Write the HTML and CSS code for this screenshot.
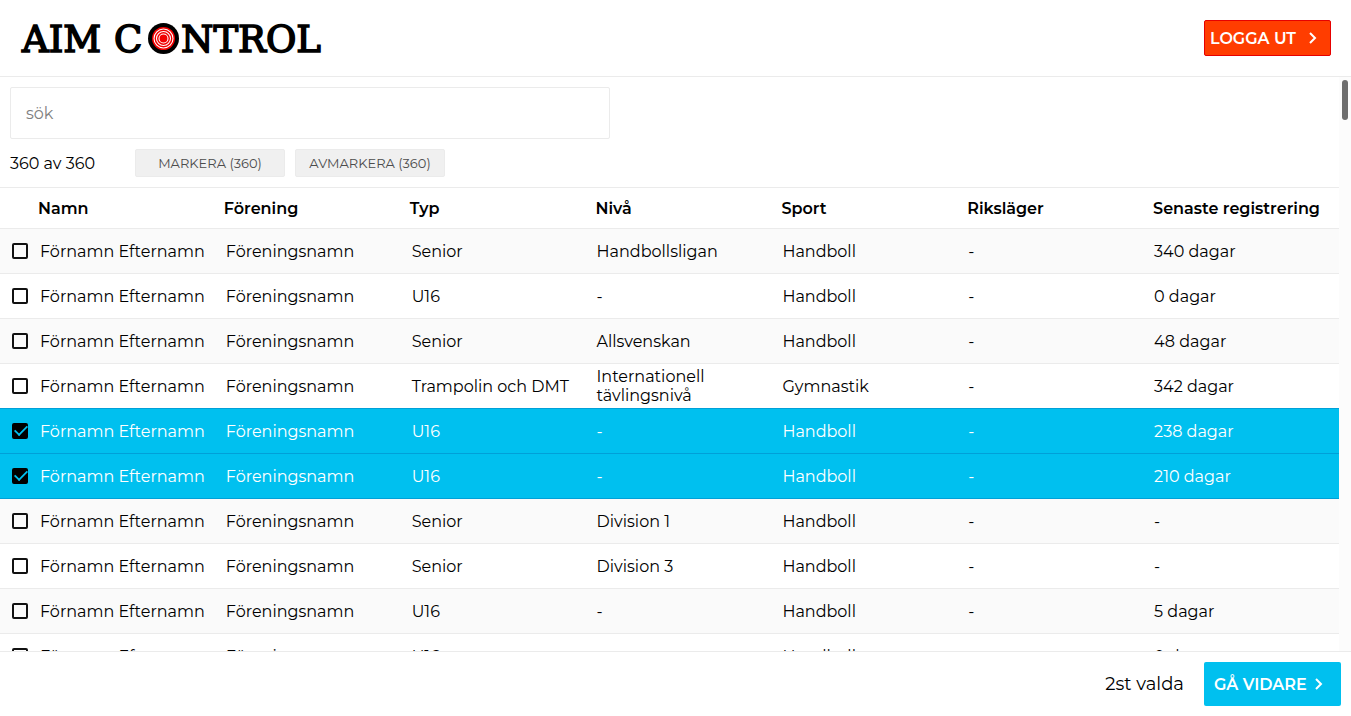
FILE: index.html
```html
<!DOCTYPE html>
<html lang="sv">
<head>
<meta charset="utf-8">
<meta name="viewport" content="width=device-width, initial-scale=1">
<title>Aim Control</title>
<link rel="stylesheet" href="styles.css">
</head>
<body>
<header class="topbar">
  <svg class="logo" viewBox="0 -6 310 52" role="img" aria-label="Aim Control">
    <g class="logo-text">
      <text x="2" y="34">AIM</text>
      <text x="94" y="34">C</text>
      <text x="161" y="34">NTROL</text>
    </g>
    <circle cx="143.500" cy="20.500" r="15.500" fill="#000"/>
    <circle cx="143.500" cy="20.500" r="11.500" fill="#f00000"/>
    <g fill="none" stroke="#fff" stroke-width="1.100">
      <circle cx="143.500" cy="20.500" r="9.500"/>
      <circle cx="143.500" cy="20.500" r="7"/>
      <circle cx="143.500" cy="20.500" r="4.500"/>
    </g>
  </svg>
  <button class="btn btn-logout" type="button">LOGGA UT
    <svg class="chevron" viewBox="0 0 12 12" aria-hidden="true"><path d="M3 1 8 6l-5 5"/></svg>
  </button>
</header>
<main class="content">
  <div class="list">
    <div class="filters">
      <input class="search" type="text" placeholder="sök" aria-label="sök">
      <div class="actions">
        <span class="count">360 av 360</span>
        <button class="btn-small" type="button">MARKERA (360)</button>
        <button class="btn-small" type="button">AVMARKERA (360)</button>
      </div>
    </div>
    <table class="people">
      <colgroup><col class="col-check"><col><col><col><col><col><col><col></colgroup>
      <thead>
        <tr><td></td><th scope="col">Namn</th><th scope="col">Förening</th><th scope="col">Typ</th><th scope="col">Nivå</th><th scope="col">Sport</th><th scope="col">Riksläger</th><th scope="col">Senaste registrering</th></tr>
      </thead>
      <tbody>
        <tr><td><input type="checkbox" id="p1"></td><td><label for="p1">Förnamn Efternamn</label></td><td>Föreningsnamn</td><td>Senior</td><td>Handbollsligan</td><td>Handboll</td><td>-</td><td>340 dagar</td></tr>
        <tr><td><input type="checkbox" id="p2"></td><td><label for="p2">Förnamn Efternamn</label></td><td>Föreningsnamn</td><td>U16</td><td>-</td><td>Handboll</td><td>-</td><td>0 dagar</td></tr>
        <tr><td><input type="checkbox" id="p3"></td><td><label for="p3">Förnamn Efternamn</label></td><td>Föreningsnamn</td><td>Senior</td><td>Allsvenskan</td><td>Handboll</td><td>-</td><td>48 dagar</td></tr>
        <tr><td><input type="checkbox" id="p4"></td><td><label for="p4">Förnamn Efternamn</label></td><td>Föreningsnamn</td><td>Trampolin och DMT</td><td>Internationell tävlingsnivå</td><td>Gymnastik</td><td>-</td><td>342 dagar</td></tr>
        <tr class="selected"><td><input type="checkbox" id="p5" checked></td><td><label for="p5">Förnamn Efternamn</label></td><td>Föreningsnamn</td><td>U16</td><td>-</td><td>Handboll</td><td>-</td><td>238 dagar</td></tr>
        <tr class="selected"><td><input type="checkbox" id="p6" checked></td><td><label for="p6">Förnamn Efternamn</label></td><td>Föreningsnamn</td><td>U16</td><td>-</td><td>Handboll</td><td>-</td><td>210 dagar</td></tr>
        <tr><td><input type="checkbox" id="p7"></td><td><label for="p7">Förnamn Efternamn</label></td><td>Föreningsnamn</td><td>Senior</td><td>Division 1</td><td>Handboll</td><td>-</td><td>-</td></tr>
        <tr><td><input type="checkbox" id="p8"></td><td><label for="p8">Förnamn Efternamn</label></td><td>Föreningsnamn</td><td>Senior</td><td>Division 3</td><td>Handboll</td><td>-</td><td>-</td></tr>
        <tr><td><input type="checkbox" id="p9"></td><td><label for="p9">Förnamn Efternamn</label></td><td>Föreningsnamn</td><td>U16</td><td>-</td><td>Handboll</td><td>-</td><td>5 dagar</td></tr>
        <tr><td><input type="checkbox" id="p10"></td><td><label for="p10">Förnamn Efternamn</label></td><td>Föreningsnamn</td><td>U16</td><td>-</td><td>Handboll</td><td>-</td><td>0 dagar</td></tr>
      </tbody>
    </table>
  </div>
  <div class="scroll-track" aria-hidden="true"><div class="scroll-thumb"></div></div>
</main>
<footer class="bottombar">
  <span class="chosen">2st valda</span>
  <button class="btn btn-next" type="button">GÅ VIDARE
    <svg class="chevron" viewBox="0 0 12 12" aria-hidden="true"><path d="M3 1 8 6l-5 5"/></svg>
  </button>
</footer>
</body>
</html>
```
FILE: styles.css
```css
* { box-sizing: border-box; }

body {
  margin: 0;
  height: 100vh;
  display: flex;
  flex-direction: column;
  background: #fff;
  color: #000;
  font: 400 16px/normal Montserrat, Inter, "Open Sans", sans-serif;
}

button, input { font-family: inherit; }

.topbar {
  flex: none;
  display: flex;
  align-items: center;
  justify-content: space-between;
  padding: 12px 20px;
  border-bottom: 1px solid #ebebeb;
}

.logo { width: 310px; height: 52px; }
.logo-text {
  font: 400 37px "DejaVu Serif", serif;
  stroke: #000;
  stroke-width: 1.6;
}

.btn {
  display: flex;
  align-items: center;
  color: #fff;
  font-size: 16px;
  font-weight: 600;
  border-radius: 2px;
  white-space: nowrap;
}

.btn-logout {
  gap: 10px;
  min-width: 127px;
  height: 36px;
  padding: 0 11px 0 5px;
  justify-content: space-between;
  background: #ff3d00;
  border: 1px solid #e60000;
}

.chevron {
  width: 12px;
  height: 12px;
  fill: none;
  stroke: currentColor;
  stroke-width: 2;
}

.content {
  flex: 1;
  min-height: 0;
  display: flex;
}

.list {
  flex: 1;
  min-width: 0;
  overflow: hidden;
}

.filters { padding: 10px; }

.search {
  display: block;
  width: 600px;
  max-width: 100%;
  height: 52px;
  padding: 0 15px;
  border: 1px solid #ebebeb;
  border-radius: 2px;
  background: #fff;
  font-size: 16px;
  font-weight: 400;
}
.search::placeholder { color: #808080; opacity: 1; }

.actions {
  display: flex;
  align-items: center;
  gap: 10px;
  margin-top: 10px;
}
.count { min-width: 115px; }

.btn-small {
  width: 150px;
  height: 28px;
  padding: 0;
  border: 1px solid #ebebeb;
  border-radius: 2px;
  background: #f0f0f0;
  color: #4c4c4c;
  font-size: 13px;
}

.people {
  width: 100%;
  table-layout: fixed;
  border-spacing: 0;
  border-top: 1px solid #ebebeb;
}
.col-check { width: 38px; }

.people th, .people td {
  padding: 0;
  text-align: left;
  border-bottom: 1px solid #ebebeb;
}
.people thead tr { height: 41px; }
.people th { font-weight: 600; white-space: nowrap; }
.people tbody tr { height: 45px; }
.people tbody td { padding-left: 1px; }
.people tbody td:nth-child(2),
.people tbody td:nth-child(3),
.people tbody td:nth-child(4) { padding-left: 2px; }
.people tbody tr:nth-child(odd) { background: #fafafa; }
.people tbody td:first-child { padding-left: 12px; }

.people tbody tr.selected { background: #00c0ef; color: #fff; }
.people .selected td,
.people tr:has(+ .selected) td { border-bottom-color: #00a0d8; }

.people input {
  appearance: none;
  display: block;
  width: 16px;
  height: 16px;
  margin: 0;
  border: 2px solid #111;
  border-radius: 2px;
}
.people input:checked {
  display: grid;
  place-items: center;
  background: #000;
  border-color: #000;
}
.people input:checked::before {
  content: "";
  width: 12px;
  height: 6px;
  margin-bottom: 4px;
  border: solid #00c0ef;
  border-width: 0 0 2px 2px;
  transform: rotate(-45deg) scale(0.9);
}

.scroll-track {
  flex: none;
  width: 12px;
  padding: 3px;
  background: #fcfcfc;
}
.scroll-thumb {
  width: 6px;
  height: 40px;
  border-radius: 3px;
  background: #6e6e6e;
}

.bottombar {
  flex: none;
  display: flex;
  align-items: center;
  justify-content: flex-end;
  gap: 20px;
  padding: 10px;
  border-top: 1px solid #ebebeb;
}
.chosen { font-size: 18px; }

.btn-next {
  min-width: 137px;
  height: 44px;
  gap: 6px;
  padding: 0 16px 0 10px;
  justify-content: space-between;
  background: #00c0ef;
  border: 0;
}
```
